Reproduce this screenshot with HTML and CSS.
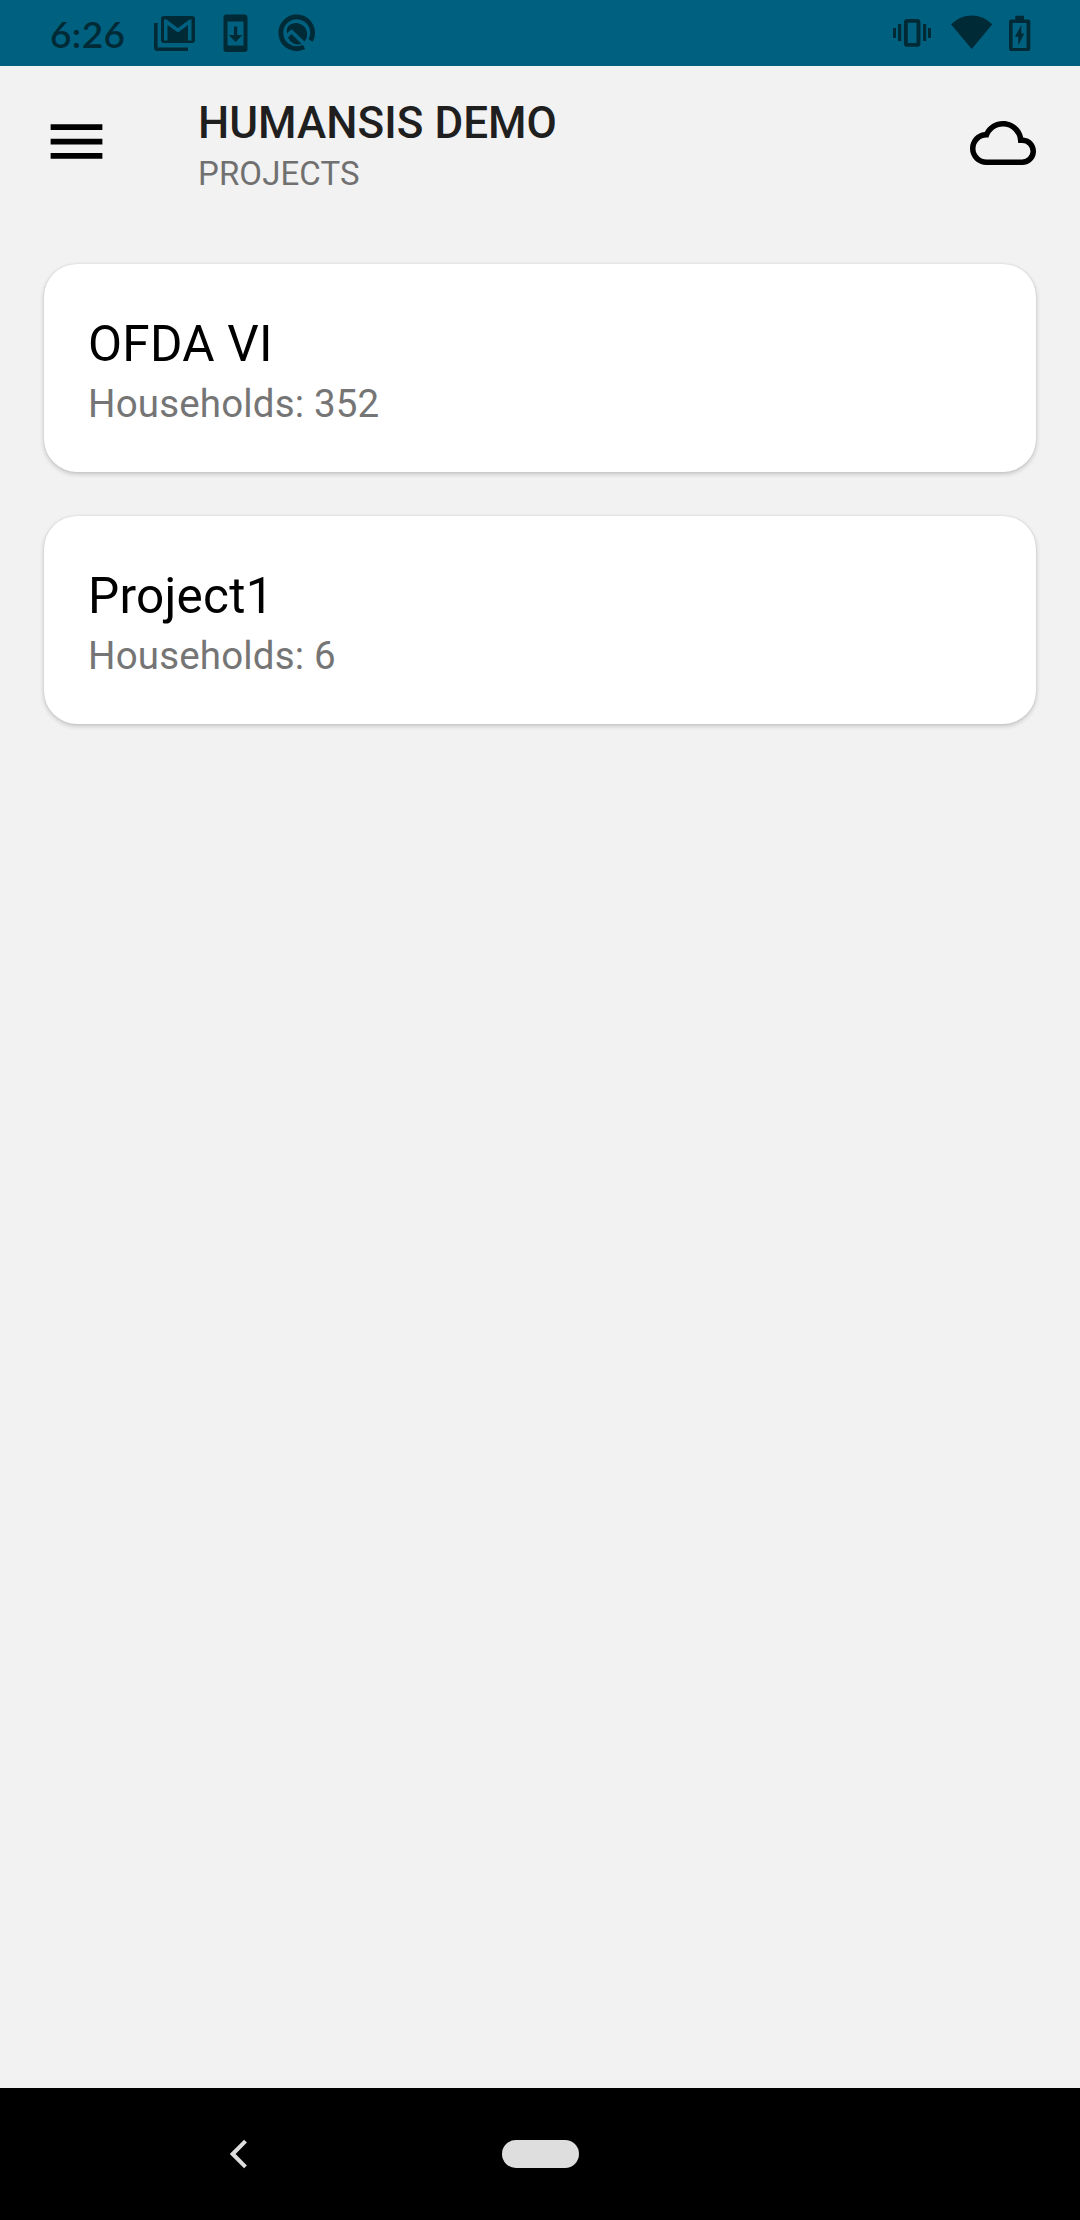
FILE: index.html
```html
<!DOCTYPE html>
<html lang="en">
<head>
  <meta charset="UTF-8" />
  <meta name="viewport" content="width=device-width, initial-scale=1" />
  <title>Humansis - Projects</title>
  <link rel="stylesheet" href="styles.css">
</head>
<body>

  <div class="status-bar">
    <span class="time">6:26</span>
    <svg class="notifications" width="180" height="66" viewBox="150 0 180 66">
      <!-- mail -->
      <path d="M155.800 23v24.500q0 1.700 1.700 1.700H188" fill="none" stroke="currentColor" stroke-width="3.600"/>
      <path fill-rule="evenodd" d="M164 16h28q3 0 3 3v21q0 3-3 3h-28q-3 0-3-3v-21q0-3 3-3zM164 19.500v21h3.500v-15.500l10.500 7.500 10-7.500v15.500h3.500v-21h-2l-11.500 8.500-11.500-8.500z"/>
      <!-- download to phone -->
      <path fill-rule="evenodd" d="M226.500 14.500h18q3 0 3 3v31.500q0 3-3 3h-18q-3 0-3-3v-31.500q0-3 3-3zM227.500 21.500v24h16v-24z"/>
      <path d="M234 26.500h3.200v8.500h5.300l-6.900 7-6.900-7h5.300z"/>
      <!-- assistant -->
      <path d="M304 46.900A15.900 15.900 0 1 1 310.600 40.500" fill="none" stroke="currentColor" stroke-width="4.800"/>
      <path d="M287.500 27a10.500 10.500 0 1 1 17 14.500l-12-11.500q-1-1-2 0l-3.500 3.500a10.500 10.500 0 0 1 .5-6.500zM288 37.500l3.500-3.500 10 9.700a10.500 10.500 0 0 1-13.500-6.200z"/>
    </svg>
    <svg class="system" width="148" height="66" viewBox="890 0 148 66">
      <!-- vibrate -->
      <rect x="905.900" y="20.900" width="12.600" height="24" rx="1.500" fill="none" stroke="currentColor" stroke-width="3.900"/>
      <path d="M893 28h3v10h-3zM898 24h3.300v17h-3.300zM923 24h3.300v17h-3.300zM928 28h3v10h-3z"/>
      <!-- wifi -->
      <path d="M971.700 49L951 24.300Q960 15.500 971.700 15.500T992.300 24.300z"/>
      <!-- battery -->
      <path fill-rule="evenodd" d="M1015.300 15.700h8.700v3.800h4.300q2 0 2 2v27.500q0 2-2 2h-17.300q-2 0-2-2v-27.500q0-2 2-2h4.300zM1012.600 23v25h14v-25z"/>
      <path d="M1021.300 25v8.500h3l-6 11.800v-8.500h-3.400z"/>
    </svg>
  </div>

  <header class="toolbar">
    <svg class="menu-icon" viewBox="0 0 24 24"><path d="M3 6h18v2H3zM3 11h18v2H3zM3 16h18v2H3z"/></svg>
    <div class="titles">
      <h1>HUMANSIS DEMO</h1>
      <p>PROJECTS</p>
    </div>
    <svg class="cloud-icon" viewBox="0 0 24 24"><path d="M19 18H6a4 4 0 0 1 0-8h.71C7.370 7.690 9.500 6 12 6a5.500 5.500 0 0 1 5.500 5.500v.5H19a3 3 0 0 1 0 6m.35-7.960C18.670 6.590 15.640 4 12 4 9.110 4 6.600 5.640 5.350 8.030 2.340 8.360 0 10.900 0 14a6 6 0 0 0 6 6h13a5 5 0 0 0 5-5c0-2.640-2.050-4.780-4.650-4.960z"/></svg>
  </header>

  <main class="projects">
    <div class="card">
      <h2>OFDA VI</h2>
      <p>Households: 352</p>
    </div>
    <div class="card">
      <h2>Project1</h2>
      <p>Households: 6</p>
    </div>
  </main>

  <nav class="nav-bar">
    <svg class="back" width="18" height="30" viewBox="0 0 18 30"><path d="M15.500 2.200L2.700 15l12.800 12.800" fill="none" stroke="currentColor" stroke-width="4"/></svg>
    <span class="home"></span>
  </nav>

</body>
</html>
```

FILE: styles.css
```css
* {
  box-sizing: border-box;
}
body {
  margin: 0;
  height: 2220px;
  display: flex;
  flex-direction: column;
  background-color: #f2f2f2;
  font-family: Roboto, sans-serif;
}
h1, h2, p {
  margin: 0;
  font-weight: 400;
  white-space: nowrap;
}
svg {
  display: block;
  fill: currentColor;
  flex-shrink: 0;
}

/* status bar */
.status-bar {
  height: 66px;
  display: flex;
  align-items: center;
  padding-left: 50px;
  padding-right: 42px;
  background-color: #00607f;
  color: #002a36;
}
.time {
  width: 100px;
  padding-top: 2px;
  font-family: Lato, sans-serif;
  font-size: 37px;
  font-weight: 600;
  letter-spacing: 0.4px;
  line-height: 64px;
}
.system {
  margin-left: auto;
}

/* toolbar */
.toolbar {
  height: 154px;
  display: flex;
  align-items: flex-start;
  padding: 41px 44px 0 42px;
}
.menu-icon {
  width: 69px;
  height: 69px;
}
.titles {
  margin-left: 87px;
  margin-top: -10px;
}
.titles h1 {
  font-size: 44px;
  font-weight: 500;
  line-height: 52px;
  letter-spacing: 0.05px;
  color: #1f1f1f;
}
.titles p {
  font-size: 33px;
  line-height: 39px;
  margin-top: 5px;
  letter-spacing: 0.1px;
  color: #707070;
}
.cloud-icon {
  width: 66px;
  height: 66px;
  margin-left: auto;
  margin-top: 3px;
}

/* project list */
.projects {
  flex: 1;
  display: flex;
  flex-direction: column;
  gap: 44px;
  padding: 44px;
}
.card {
  height: 208px;
  padding: 51px 44px;
  border-radius: 33px;
  background-color: #fff;
  box-shadow: 0 2px 5px rgba(0, 0, 0, 0.2), 0 0 2px rgba(0, 0, 0, 0.1);
}
.card h2 {
  font-size: 49.5px;
  line-height: 58px;
  letter-spacing: 0.25px;
  color: #000;
}
.card p {
  font-size: 38.5px;
  line-height: 46px;
  margin-top: 8px;
  letter-spacing: 0.17px;
  color: #757575;
}

/* navigation bar */
.nav-bar {
  height: 132px;
  display: flex;
  align-items: center;
  padding-left: 230px;
  background-color: #000;
  color: #dedede;
}
.home {
  width: 77px;
  height: 28px;
  margin-left: 254px;
  border-radius: 14px;
  background-color: #dedede;
}
```
